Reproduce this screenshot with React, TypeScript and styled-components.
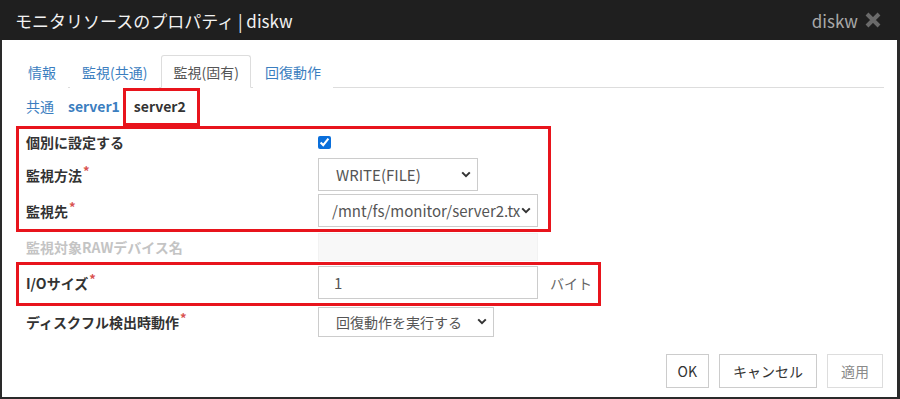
import styled, { createGlobalStyle } from 'styled-components';

const GlobalStyle = createGlobalStyle`
  html, body {
    margin: 0;
    padding: 0;
    background: #ffffff;
  }
  body {
    font-family: 'Noto Sans CJK JP', 'Noto Sans', 'Liberation Sans', sans-serif;
    color: #333333;
  }
`;

const Dialog = styled.div`
  width: 900px;
  height: 399px;
  box-sizing: border-box;
  display: flex;
  flex-direction: column;
  background: #ffffff;
  border-left: 2px solid #2a2a2a;
  border-right: 3px solid #2a2a2a;
  border-bottom: 2px solid #2a2a2a;
`;

const TitleBar = styled.header`
  height: 40px;
  margin: 0 -3px 0 -2px;
  padding: 0 18px 0 15px;
  display: flex;
  align-items: center;
  background: #1f1f1f;
  flex-shrink: 0;
`;

const Title = styled.h1`
  flex: 1;
  margin: 0;
  font-size: 17px;
  font-weight: normal;
  color: #f2f2f2;
  white-space: pre;
`;

const TitleTag = styled.span`
  font-size: 17px;
  color: #a8a8a8;
  margin-right: 6px;
`;

const CloseButton = styled.span`
  display: flex;
  align-items: center;
`;

const Body = styled.div`
  flex: 1;
  display: flex;
  flex-direction: column;
  padding: 15px 13px 0 14px;
`;

const TabBar = styled.nav`
  display: flex;
  height: 32px;
  border-bottom: 1px solid #dddddd;
`;

const Tab = styled.div<{ $active?: boolean }>`
  display: flex;
  align-items: center;
  padding: 0 11px;
  margin-right: 2px;
  font-size: 14px;
  color: ${(p) => (p.$active ? '#555555' : '#3b7ebf')};
  background: #ffffff;
  border: 1px solid ${(p) => (p.$active ? '#dddddd' : 'transparent')};
  border-bottom-color: ${(p) => (p.$active ? '#ffffff' : 'transparent')};
  border-radius: 3px 3px 0 0;
  margin-bottom: -1px;
`;

const SubTabs = styled.div`
  display: flex;
  align-items: center;
  gap: 14px;
  height: 36px;
  padding-left: 10px;
  font-size: 14px;
`;

const SubTab = styled.span<{ $active?: boolean; $bold?: boolean; $marked?: boolean }>`
  position: relative;
  color: ${(p) => (p.$active ? '#333333' : '#3b7ebf')};
  font-weight: ${(p) => (p.$bold ? 'bold' : 'normal')};

  ${(p) =>
    p.$marked &&
    `
    &::after {
      content: '';
      position: absolute;
      top: -8px;
      bottom: -10px;
      left: -11px;
      right: -14px;
      border: 3px solid #e8141c;
    }
  `}
`;

const Form = styled.div`
  display: flex;
  flex-direction: column;
  margin-top: 2px;
`;

const Highlight = styled.div<{ $width: number; $pad: string }>`
  width: ${(p) => p.$width}px;
  padding: ${(p) => p.$pad};
  display: flex;
  flex-direction: column;
  gap: 3px;
  outline: 3px solid #e8141c;
  outline-offset: -3px;
  box-sizing: border-box;
`;

const Row = styled.div<{ $height: number }>`
  display: grid;
  grid-template-columns: 292px auto;
  align-items: center;
  min-height: ${(p) => p.$height}px;
  padding-left: 10px;
`;

const Label = styled.label<{ $disabled?: boolean }>`
  font-size: 14px;
  font-weight: bold;
  color: ${(p) => (p.$disabled ? '#c4c4c4' : '#333333')};
  white-space: nowrap;
`;

const Required = styled.sup`
  color: #d9534f;
  font-size: 13px;
  font-weight: bold;
  margin-left: 1px;
  vertical-align: top;
  position: relative;
  top: -4px;
`;

const Control = styled.div`
  display: flex;
  align-items: center;
  gap: 12px;
`;

const Checkbox = styled.input`
  width: 13px;
  height: 13px;
  margin: 0;
  accent-color: #0a6fdb;
`;

const Select = styled.div<{ $width: number; $height: number }>`
  width: ${(p) => p.$width}px;
  height: ${(p) => p.$height}px;
  box-sizing: border-box;
  display: flex;
  align-items: center;
  border: 1px solid #cccccc;
  padding: 0 6px 0 17px;
  color: #555555;
  background: #ffffff;
  overflow: hidden;
`;

const SelectText = styled.span<{ $tight?: boolean; $small?: boolean }>`
  flex: 1;
  white-space: nowrap;
  font-size: ${(p) => (p.$small ? 14 : 15)}px;
  margin-left: ${(p) => (p.$tight ? '-4px' : '0')};
`;

const TextInput = styled.div<{ $disabled?: boolean }>`
  width: 220px;
  height: ${(p) => (p.$disabled ? 28 : 33)}px;
  box-sizing: border-box;
  display: flex;
  align-items: center;
  padding-left: 15px;
  border: 1px solid ${(p) => (p.$disabled ? '#f2f2f2' : '#cccccc')};
  background: ${(p) => (p.$disabled ? '#f8f8f8' : '#ffffff')};
  font-size: 15px;
  color: #555555;
`;

const Unit = styled.span`
  font-size: 14px;
  color: #666666;
`;

const Footer = styled.div`
  display: flex;
  justify-content: flex-end;
  gap: 10px;
  margin-top: auto;
  padding: 0 1px 9px 0;
`;

const Button = styled.button<{ $disabled?: boolean; $pad?: number }>`
  height: 34px;
  padding: 0 ${(p) => p.$pad ?? 13}px;
  border: 1px solid ${(p) => (p.$disabled ? '#dddddd' : '#cccccc')};
  background: #ffffff;
  font-family: inherit;
  font-size: 14px;
  color: ${(p) => (p.$disabled ? '#8a8a8a' : '#333333')};
  border-radius: 0;
`;

const Chevron = () => (
  <svg width="10" height="7" viewBox="0 0 10 7">
    <path d="M1.2 1.4 L5 5.2 L8.8 1.4" fill="none" stroke="#333" strokeWidth="2" />
  </svg>
);

const CloseIcon = () => (
  <svg width="18" height="16" viewBox="0 0 18 16">
    <path d="M3 2 L15 14 M15 2 L3 14" stroke="#6a6a6a" strokeWidth="4" />
  </svg>
);

const tabs = ['情報', '監視(共通)', '監視(固有)', '回復動作'];

export default function App() {
  return (
    <>
      <GlobalStyle />
      <Dialog>
        <TitleBar>
          <Title>モニタリソースのプロパティ | diskw</Title>
          <TitleTag>diskw</TitleTag>
          <CloseButton>
            <CloseIcon />
          </CloseButton>
        </TitleBar>

        <Body>
          <TabBar>
            {tabs.map((t) => (
              <Tab key={t} $active={t === '監視(固有)'}>
                {t}
              </Tab>
            ))}
          </TabBar>

          <SubTabs>
            <SubTab>共通</SubTab>
            <SubTab $bold>server1</SubTab>
            <SubTab $bold $active $marked>
              server2
            </SubTab>
          </SubTabs>

          <Form>
            <Highlight $width={535} $pad="3px 0 5px">
              <Row $height={26}>
                <Label>個別に設定する</Label>
                <Control>
                  <Checkbox type="checkbox" defaultChecked />
                </Control>
              </Row>
              <Row $height={33}>
                <Label>
                  監視方法<Required>*</Required>
                </Label>
                <Control>
                  <Select $width={160} $height={33}>
                    <SelectText>WRITE(FILE)</SelectText>
                    <Chevron />
                  </Select>
                </Control>
              </Row>
              <Row $height={33}>
                <Label>
                  監視先<Required>*</Required>
                </Label>
                <Control>
                  <Select $width={220} $height={33}>
                    <SelectText $tight>/mnt/fs/monitor/server2.tx</SelectText>
                    <Chevron />
                  </Select>
                </Control>
              </Row>
            </Highlight>

            <Row $height={30}>
              <Label $disabled>監視対象RAWデバイス名</Label>
              <Control>
                <TextInput $disabled />
              </Control>
            </Row>

            <Highlight $width={585} $pad="4px 0 7px">
              <Row $height={33}>
                <Label>
                  I/Oサイズ<Required>*</Required>
                </Label>
                <Control>
                  <TextInput>1</TextInput>
                  <Unit>バイト</Unit>
                </Control>
              </Row>
            </Highlight>

            <Row $height={31}>
              <Label>
                ディスクフル検出時動作<Required>*</Required>
              </Label>
              <Control>
                <Select $width={176} $height={30}>
                  <SelectText $small>回復動作を実行する</SelectText>
                  <Chevron />
                </Select>
              </Control>
            </Row>
          </Form>

          <Footer>
            <Button $pad={11}>OK</Button>
            <Button>キャンセル</Button>
            <Button $disabled>適用</Button>
          </Footer>
        </Body>
      </Dialog>
    </>
  );
}
